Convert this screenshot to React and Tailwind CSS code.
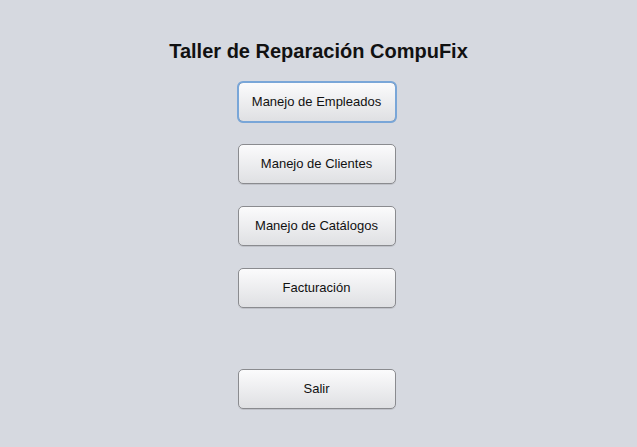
import React from "react";

const items = [
  "Manejo de Empleados",
  "Manejo de Clientes",
  "Manejo de Catálogos",
  "Facturación",
];

function Boton({ label, focused }) {
  return (
    <button
      className={
        "w-[158px] h-[40px] rounded-[5px] border border-[#8a8b8f] bg-gradient-to-b from-[#fbfbfc] to-[#dfe0e3] text-[13px] text-[#111] shadow-[0_1px_0_rgba(0,0,0,0.1)] " +
        (focused ? "outline outline-[2px] outline-[#79a6d8] outline-offset-[-1px]" : "")
      }
    >
      {label}
    </button>
  );
}

export default function App() {
  return (
    <div
      className="w-full h-[447px] bg-[#d6d9e0] flex flex-col items-center pt-[39px]"
      style={{ fontFamily: '"Liberation Sans", Arial, sans-serif' }}
    >
      <h1 className="text-[20px] leading-[24px] font-bold text-[#111]">
        Taller de Reparación CompuFix
      </h1>
      <div className="flex flex-col items-center gap-[22px] mt-[19px] mr-[4px]">
        {items.map((t, i) => (
          <Boton key={t} label={t} focused={i === 0} />
        ))}
      </div>
      <div className="mt-[61px] mr-[4px]">
        <Boton label="Salir" />
      </div>
    </div>
  );
}
